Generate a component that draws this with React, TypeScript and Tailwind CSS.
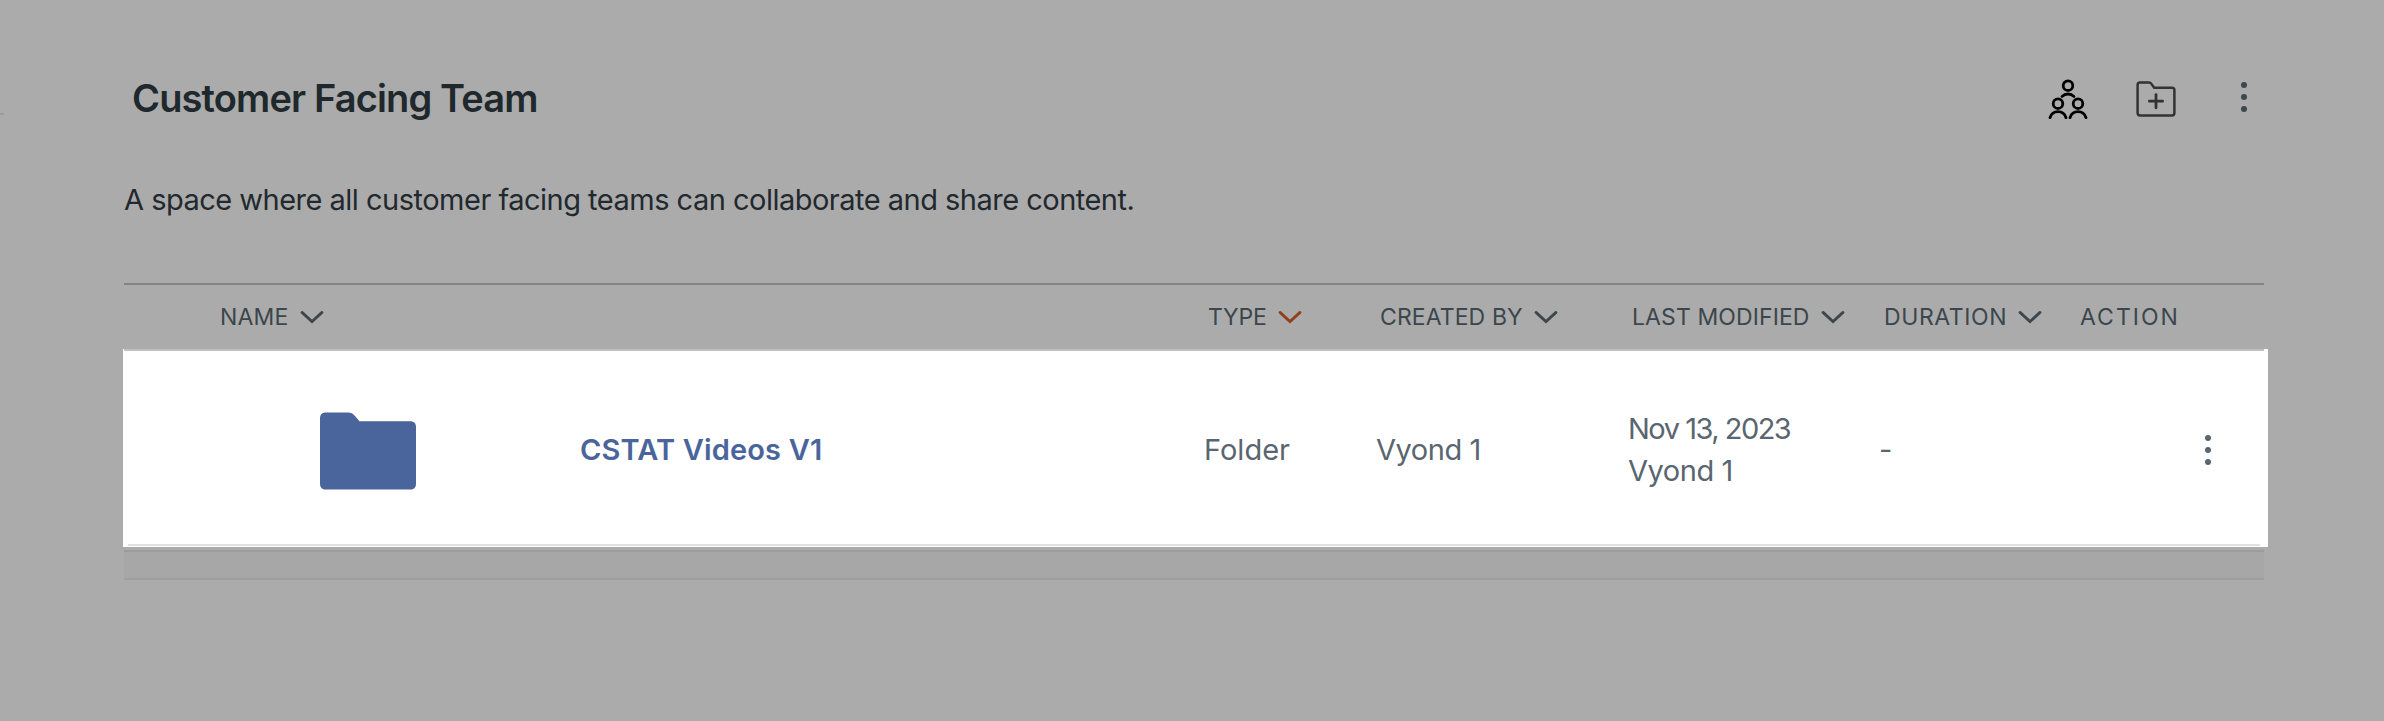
import React from "react";

interface Column {
  label: string;
  spacing: string;
  sortable: boolean;
  active?: boolean;
}

const columns: Column[] = [
  { label: "NAME", spacing: "tracking-[0.2px]", sortable: true },
  { label: "TYPE", spacing: "tracking-[-0.2px]", sortable: true, active: true },
  { label: "CREATED BY", spacing: "tracking-[0.1px]", sortable: true },
  { label: "LAST MODIFIED", spacing: "tracking-[0.1px]", sortable: true },
  { label: "DURATION", spacing: "tracking-[0.6px]", sortable: true },
  { label: "ACTION", spacing: "tracking-[2px]", sortable: false },
];

function Chevron({ active }: { active?: boolean }): JSX.Element {
  return (
    <svg
      width="24"
      height="14"
      viewBox="0 0 24 14"
      fill="none"
      className={active ? "text-[#8f3f1b]" : "text-[#3b464d]"}
    >
      <path d="M2 2.4 12 11.6 22 2.4" stroke="currentColor" strokeWidth="2.8" strokeLinecap="round" />
    </svg>
  );
}

function Dots(): JSX.Element {
  return (
    <svg width="6" height="30" viewBox="0 0 6 30" fill="currentColor">
      <circle cx="3" cy="3" r="3" />
      <circle cx="3" cy="15" r="3" />
      <circle cx="3" cy="27" r="3" />
    </svg>
  );
}

function TeamIcon(): JSX.Element {
  return (
    <svg width="40" height="40" viewBox="0 0 40 40" fill="none" stroke="#000" strokeWidth="2.8" strokeLinecap="round">
      <circle cx="20" cy="6.7" r="4.8" />
      <path d="M14 17.4c3.4-3.2 8.6-3.2 12 0" />
      <circle cx="10" cy="24.7" r="4.8" />
      <circle cx="30" cy="24.7" r="4.8" />
      <path d="M2 38.7c2.6-8 13.4-8 16 0" />
      <path d="M22 38.7c2.600-8 13.400-8 16 0" />
    </svg>
  );
}

function AddFolderIcon(): JSX.Element {
  return (
    <svg width="40" height="36" viewBox="0 0 40 36" fill="none" stroke="#333" strokeWidth="2.5" strokeLinecap="round" strokeLinejoin="round">
      <path d="M4 1.6h9c1.2 0 1.9.5 2.600 1.500l2.600 3.600H36c1.500 0 2.400.9 2.400 2.400v22.900c0 1.500-.9 2.400-2.400 2.400H4c-1.500 0-2.400-.9-2.400-2.400V4c0-1.500.9-2.400 2.400-2.400Z" />
      <path d="M20 13.600v13.200M13.400 20.200h13.200" strokeWidth="2.800" />
    </svg>
  );
}

function FolderIcon(): JSX.Element {
  return (
    <svg width="96" height="78" viewBox="0 0 96 78" fill="#4a659b">
      <path d="M6 .4h22c3 0 5 1 7 3.600L39.500 9.300H90c4 0 6 2 6 6V71.600c0 4-2 6-6 6H6c-4 0-6-2-6-6V6.400c0-4 2-6 6-6Z" />
    </svg>
  );
}

export default function App(): JSX.Element {
  return (
    <div className="h-[721px] w-[2384px] overflow-hidden bg-[#ababab] font-[Inter,sans-serif] whitespace-nowrap">
      <div className="flex h-[283px]">
        {/* end of the sidebar divider */}
        <div className="mt-[113px] h-0.5 w-1 bg-[#9b9b9b]" />
        <div className="ml-[120px] w-[2140px]">
          <header className="mt-[75px] flex h-[45px] items-center justify-between pr-[17px] pl-2">
            <h1 className="text-[38px] leading-none font-semibold tracking-[-0.86px] text-[#1f282c]">
              Customer Facing Team
            </h1>
            <div className="flex items-center text-[#3b464d]">
              <div className="mt-[3px]">
                <TeamIcon />
              </div>
              <div className="mt-[3px] ml-12">
                <AddFolderIcon />
              </div>
              <div className="mb-px ml-[65px]">
                <Dots />
              </div>
            </div>
          </header>
          <p className="mt-[59px] text-[29px] leading-[42px] tracking-[-0.51px] text-[#22292e]">
            A space where all customer facing teams can collaborate and share content.
          </p>
        </div>
      </div>

      <div className="ml-[124px] grid h-[66px] w-[2140px] grid-cols-[988px_172px_252px_252px_196px_auto] items-center border-t-2 border-[#7f8588] pl-24 text-[23px] leading-none text-[#3b464d]">
        {columns.map((col) => (
          <div key={col.label} className="flex items-center gap-[11px]">
            <span className={col.spacing}>{col.label}</span>
            {col.sortable && <Chevron active={col.active} />}
          </div>
        ))}
      </div>

      <div className="ml-[123px] flex h-[198px] w-[2145px] flex-col bg-white">
        <div className="mr-1 ml-px h-0.5 bg-[#bcc1c4]" />
        <div className="grid h-[193px] grid-cols-[260px_624px_172px_252px_251px_1fr] items-center pr-[57px] pl-[197px] text-[29px] leading-[42px] text-[#596670]">
          <div className="pt-[7px]">
            <FolderIcon />
          </div>
          <a className="pt-1 font-semibold tracking-[0.15px] text-[#4a659b]">CSTAT Videos V1</a>
          <span className="pt-1">Folder</span>
          <span className="pt-[5px] tracking-[-0.45px]">Vyond 1</span>
          <div className="flex flex-col pt-1">
            <span className="tracking-[-1.5px]">Nov 13, 2023</span>
            <span className="tracking-[-0.45px]">Vyond 1</span>
          </div>
          <div className="flex items-center justify-between pt-[5px]">
            <span>-</span>
            <Dots />
          </div>
        </div>
        <div className="mr-2 ml-[5px] h-0.5 bg-[#dde2e6]" />
      </div>

      <div className="mt-[3px] ml-[124px] h-[30px] w-[2140px] border-t-2 border-b-2 border-t-[#9c9c9c] border-b-[#9f9f9f] bg-[#a7a7a7]" />
    </div>
  );
}
